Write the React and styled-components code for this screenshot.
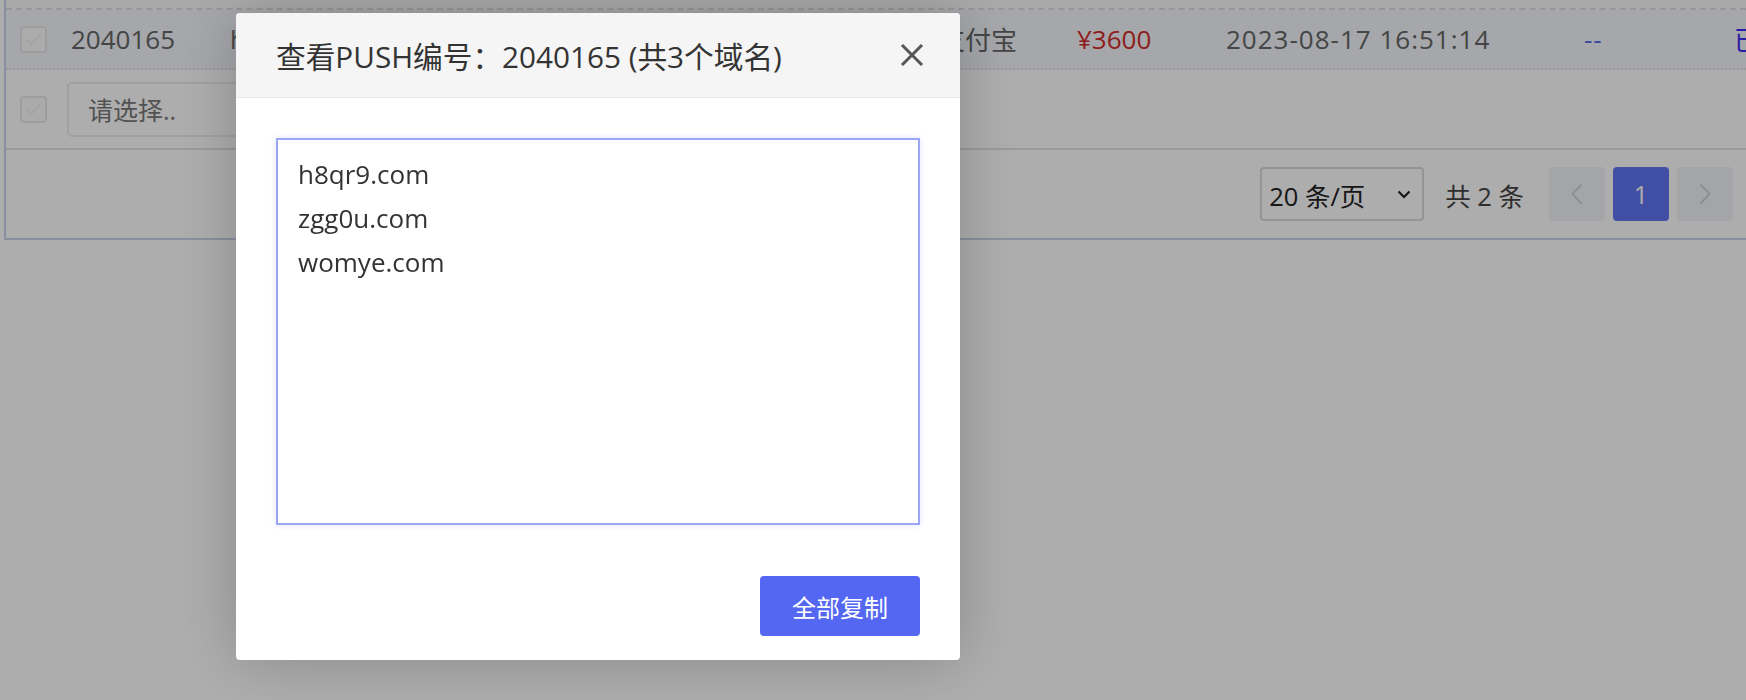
import React from "react";
import styled, { createGlobalStyle } from "styled-components";

const FONT = `"Open Sans", "Noto Sans CJK SC", sans-serif`;

const Global = createGlobalStyle`
  html, body {
    margin: 0;
    padding: 0;
    width: 1746px;
    height: 700px;
    overflow: hidden;
    background: #ffffff;
    font-family: ${FONT};
  }
  * { box-sizing: border-box; }
`;

const Page = styled.div`
  width: 1746px;
  height: 700px;
  overflow: hidden;
  background: #fff;
`;

const TableBox = styled.div`
  margin-left: 4px;
  border-left: 2px solid #c9d5ea;
  border-bottom: 2px solid #c9d5ea;
  background: #fff;
`;

const HeadStrip = styled.div`
  height: 10px;
  background: #fafafa;
  border-bottom: 2px dashed #dedede;
`;

const Row = styled.div`
  display: flex;
  align-items: center;
  height: ${(p) => p.$h}px;
  padding-left: 14px;
  background: ${(p) => p.$bg || "#fff"};
  border-bottom: 2px ${(p) => p.$line || "solid"} #e2e2e2;
  white-space: nowrap;
  font-size: 26px;
  color: #666;
`;

const CheckBox = styled.span`
  flex: none;
  width: 27px;
  height: 27px;
  border: 2px solid #e8e8e8;
  border-radius: 4px;
  background: #fdfdfd;
  display: flex;
  align-items: center;
  justify-content: center;
  margin-right: ${(p) => p.$mr}px;
`;

const Cell = styled.span`
  flex: none;
  width: ${(p) => (p.$w ? `${p.$w}px` : "auto")};
  color: ${(p) => p.$color || "#666"};
  letter-spacing: ${(p) => p.$ls || 0}px;
`;

const SelectInput = styled.div`
  flex: none;
  width: 320px;
  height: 55px;
  border: 2px solid #ececec;
  border-radius: 5px;
  padding-left: 19px;
  display: flex;
  align-items: center;
  color: #7a7a7a;
  font-size: 25px;
`;

const Pager = styled.div`
  height: 88px;
  display: flex;
  align-items: center;
  justify-content: flex-end;
  padding-right: 13px;
  font-size: 26px;
`;

const SizeSelect = styled.div`
  width: 164px;
  height: 54px;
  border: 2px solid #dcdcdc;
  border-radius: 4px;
  display: flex;
  align-items: center;
  justify-content: space-between;
  padding: 0 11px 0 7px;
  color: #222;
  font-size: 25.5px;
`;

const Total = styled.span`
  margin: 0 25px 0 21px;
  color: #444;
  font-size: 25.5px;
`;

const PageBtns = styled.div`
  display: flex;
  gap: 8px;
`;

const PageBtn = styled.div`
  width: 56px;
  height: 54px;
  border-radius: 4px;
  display: flex;
  align-items: center;
  justify-content: center;
  background: ${(p) => (p.$active ? "#6077f2" : "#f1f4fa")};
  color: #fff;
  font-size: 25px;
`;

const Overlay = styled.div`
  position: fixed;
  inset: 0;
  background: rgba(0, 0, 0, 0.32);
`;

const Dialog = styled.div`
  position: absolute;
  left: 236px;
  top: 13px;
  width: 724px;
  background: #fff;
  border-radius: 4px;
  overflow: hidden;
  box-shadow: 0 0 60px rgba(0, 0, 0, 0.22);
`;

const DialogHeader = styled.div`
  height: 85px;
  background: #f5f5f5;
  border-bottom: 1px solid #e8e8e8;
  display: flex;
  align-items: center;
  justify-content: space-between;
  padding: 0 36px 0 40px;
`;

const Title = styled.h3`
  margin: 0;
  font-weight: 400;
  font-size: 29.7px;
  color: #333;
  white-space: nowrap;
`;

const CloseBtn = styled.button`
  border: 0;
  padding: 0;
  background: transparent;
  width: 24px;
  height: 24px;
  display: flex;
  cursor: pointer;
`;

const DialogBody = styled.div`
  padding: 40px 40px 24px;
  display: flex;
  flex-direction: column;
  align-items: stretch;
`;

const Domains = styled.textarea`
  display: block;
  width: 644px;
  height: 387px;
  border: 2px solid #9ba6f5;
  border-radius: 0;
  box-shadow: 0 0 6px rgba(83, 103, 242, 0.18);
  padding: 12px 20px;
  font-family: ${FONT};
  font-size: 26px;
  line-height: 44px;
  color: #333;
  resize: none;
  outline: none;
  background: #fff;
`;

const Footer = styled.div`
  margin-top: 51px;
  display: flex;
  justify-content: flex-end;
`;

const CopyBtn = styled.button`
  width: 160px;
  height: 60px;
  border: 0;
  border-radius: 4px;
  background: #5367f2;
  color: #fff;
  font-family: ${FONT};
  font-size: 24px;
  cursor: pointer;
`;

const Check = () => (
  <svg width="17" height="13" viewBox="0 0 17 13">
    <polyline points="1.5,6.5 6,11 15.5,1.5" fill="none" stroke="#f0f0f0" strokeWidth="2" />
  </svg>
);

const Chevron = ({ dir }) => (
  <svg width="12" height="22" viewBox="0 0 12 22">
    <polyline
      points={dir === "left" ? "10.5,1.5 1.5,11 10.5,20.5" : "1.5,1.5 10.5,11 1.5,20.5"}
      fill="none"
      stroke="#cfd1d6"
      strokeWidth="2"
    />
  </svg>
);

export default function App() {
  return (
    <>
      <Global />
      <Page>
        <TableBox>
          <HeadStrip />
          <Row $h={60} $bg="#f3f6fb" $line="dotted">
            <CheckBox $mr={24}>
              <Check />
            </CheckBox>
            <Cell $w={159}>2040165</Cell>
            <Cell $w={709}>h8qr9.com</Cell>
            <Cell $w={138}>支付宝</Cell>
            <Cell $w={149} $color="#d22b2b">¥3600</Cell>
            <Cell $w={358} $ls={1}>2023-08-17 16:51:14</Cell>
            <Cell $w={150} $color="#556de8" $ls={1}>--</Cell>
            <Cell $color="#3b2cf5">已推送</Cell>
          </Row>
          <Row $h={80}>
            <CheckBox $mr={20}>
              <Check />
            </CheckBox>
            <SelectInput>请选择..</SelectInput>
          </Row>
          <Pager>
            <SizeSelect>
              <span>20 条/页</span>
              <svg width="14" height="9" viewBox="0 0 14 9">
                <polyline points="1.5,1.5 7,7 12.5,1.5" fill="none" stroke="#222" strokeWidth="2.2" />
              </svg>
            </SizeSelect>
            <Total>共 2 条</Total>
            <PageBtns>
              <PageBtn>
                <Chevron dir="left" />
              </PageBtn>
              <PageBtn $active>1</PageBtn>
              <PageBtn>
                <Chevron dir="right" />
              </PageBtn>
            </PageBtns>
          </Pager>
        </TableBox>
      </Page>
      <Overlay>
        <Dialog>
          <DialogHeader>
            <Title>查看PUSH编号：2040165 (共3个域名)</Title>
            <CloseBtn aria-label="关闭">
              <svg width="24" height="24" viewBox="0 0 24 24">
                <path d="M2 2 L22 22 M22 2 L2 22" stroke="#555" strokeWidth="3" fill="none" />
              </svg>
            </CloseBtn>
          </DialogHeader>
          <DialogBody>
            <Domains readOnly value={"h8qr9.com\nzgg0u.com\nwomye.com"} />
            <Footer>
              <CopyBtn>全部复制</CopyBtn>
            </Footer>
          </DialogBody>
        </Dialog>
      </Overlay>
    </>
  );
}
